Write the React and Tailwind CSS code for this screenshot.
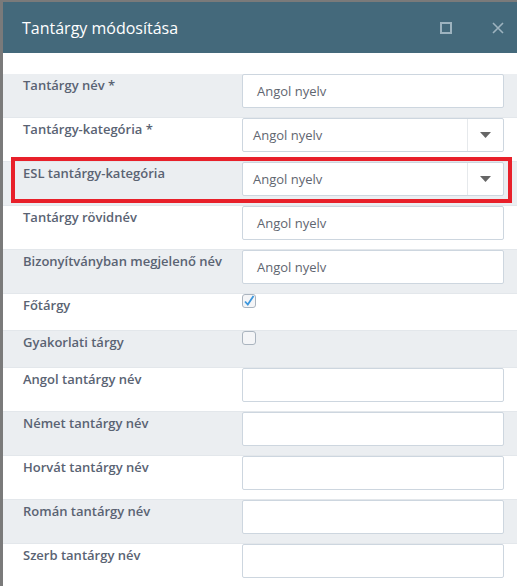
import React from 'react';

const rows = [
  { label: 'Tantárgy név *', type: 'text', value: 'Angol nyelv' },
  { label: 'Tantárgy-kategória *', type: 'select', value: 'Angol nyelv' },
  { label: 'ESL tantárgy-kategória', type: 'select', value: 'Angol nyelv' },
  { label: 'Tantárgy rövidnév', type: 'text', value: 'Angol nyelv' },
  { label: 'Bizonyítványban megjelenő név', type: 'text', value: 'Angol nyelv' },
  { label: 'Főtárgy', type: 'check', checked: true },
  { label: 'Gyakorlati tárgy', type: 'check', checked: false },
  { label: 'Angol tantárgy név', type: 'text', value: '' },
  { label: 'Német tantárgy név', type: 'text', value: '' },
  { label: 'Horvát tantárgy név', type: 'text', value: '' },
  { label: 'Román tantárgy név', type: 'text', value: '' },
  { label: 'Szerb tantárgy név', type: 'text', value: '' },
];

const Field = ({ row }) => {
  if (row.type === 'check') {
    return (
      <div className="w-[14px] h-[14px] border border-[#aab4bf] rounded-[3px] bg-[#f4f5f7] flex items-center justify-center">
        {row.checked && (
          <svg width="12" height="12" viewBox="0 0 12 12">
            <path d="M2 6.5 L4.8 9.5 L10.5 1" fill="none" stroke="#3d97dd" strokeWidth="1.8" />
          </svg>
        )}
      </div>
    );
  }
  if (row.type === 'select') {
    return (
      <div className="w-[262px] h-[34px] border border-[#cdd6df] rounded-[2px] bg-white flex">
        <div className="flex-1 flex items-center pl-[10px] pt-[2px] text-[13px] text-[#5f6670]">{row.value}</div>
        <div className="w-[36px] border-l border-[#e6e9ec] flex items-center justify-center">
          <svg width="11" height="6" viewBox="0 0 11 6">
            <path d="M0 0 H11 L5.5 6 Z" fill="#666" />
          </svg>
        </div>
      </div>
    );
  }
  return (
    <div className="w-[262px] h-[34px] border border-[#cdd6df] rounded-[2px] bg-white flex items-center pl-[14px] pt-[2px] text-[13px] text-[#5f6670]">
      {row.value}
    </div>
  );
};

export default function App() {
  return (
    <div className="relative w-[517px] h-[586px] overflow-hidden bg-[#7a7a7a] pl-[3px] pt-[2px] font-['Open_Sans',sans-serif]">
      <div className="h-full bg-white">
        {/* Header */}
        <div className="h-[51px] bg-[#44697b] flex items-center pl-[19px] pr-[13px]">
          <div className="flex-1 text-[16px] text-white">Tantárgy módosítása</div>
          <svg width="12" height="12" viewBox="0 0 12 12" className="mr-[40px]">
            <rect x="1" y="1" width="10" height="10" fill="none" stroke="#9db3bf" strokeWidth="2" />
          </svg>
          <svg width="12" height="12" viewBox="0 0 12 12">
            <path d="M1 1 L11 11 M11 1 L1 11" stroke="#9db3bf" strokeWidth="1.6" />
          </svg>
        </div>

        {/* Form rows */}
        <div className="pt-[21px]">
          {rows.map((row, i) => (
            <div
              key={row.label}
              className={`flex border-b border-[#e3e7eb] ${row.type === 'check' ? 'h-[37px]' : 'h-[44px]'} ${i % 2 === 0 ? 'bg-[#ebeef1]' : 'bg-white'}`}
            >
              <div className="w-[239px] pl-[20px] pt-[1px] text-[13px] font-semibold text-[#5a6373] leading-[20px]">
                {row.label}
              </div>
              <Field row={row} />
            </div>
          ))}
        </div>
      </div>

      {/* Highlight annotation */}
      <div className="absolute left-[11px] top-[157px] w-[501px] h-[46px] border-[4px] border-[#e8202a]" />
    </div>
  );
}
